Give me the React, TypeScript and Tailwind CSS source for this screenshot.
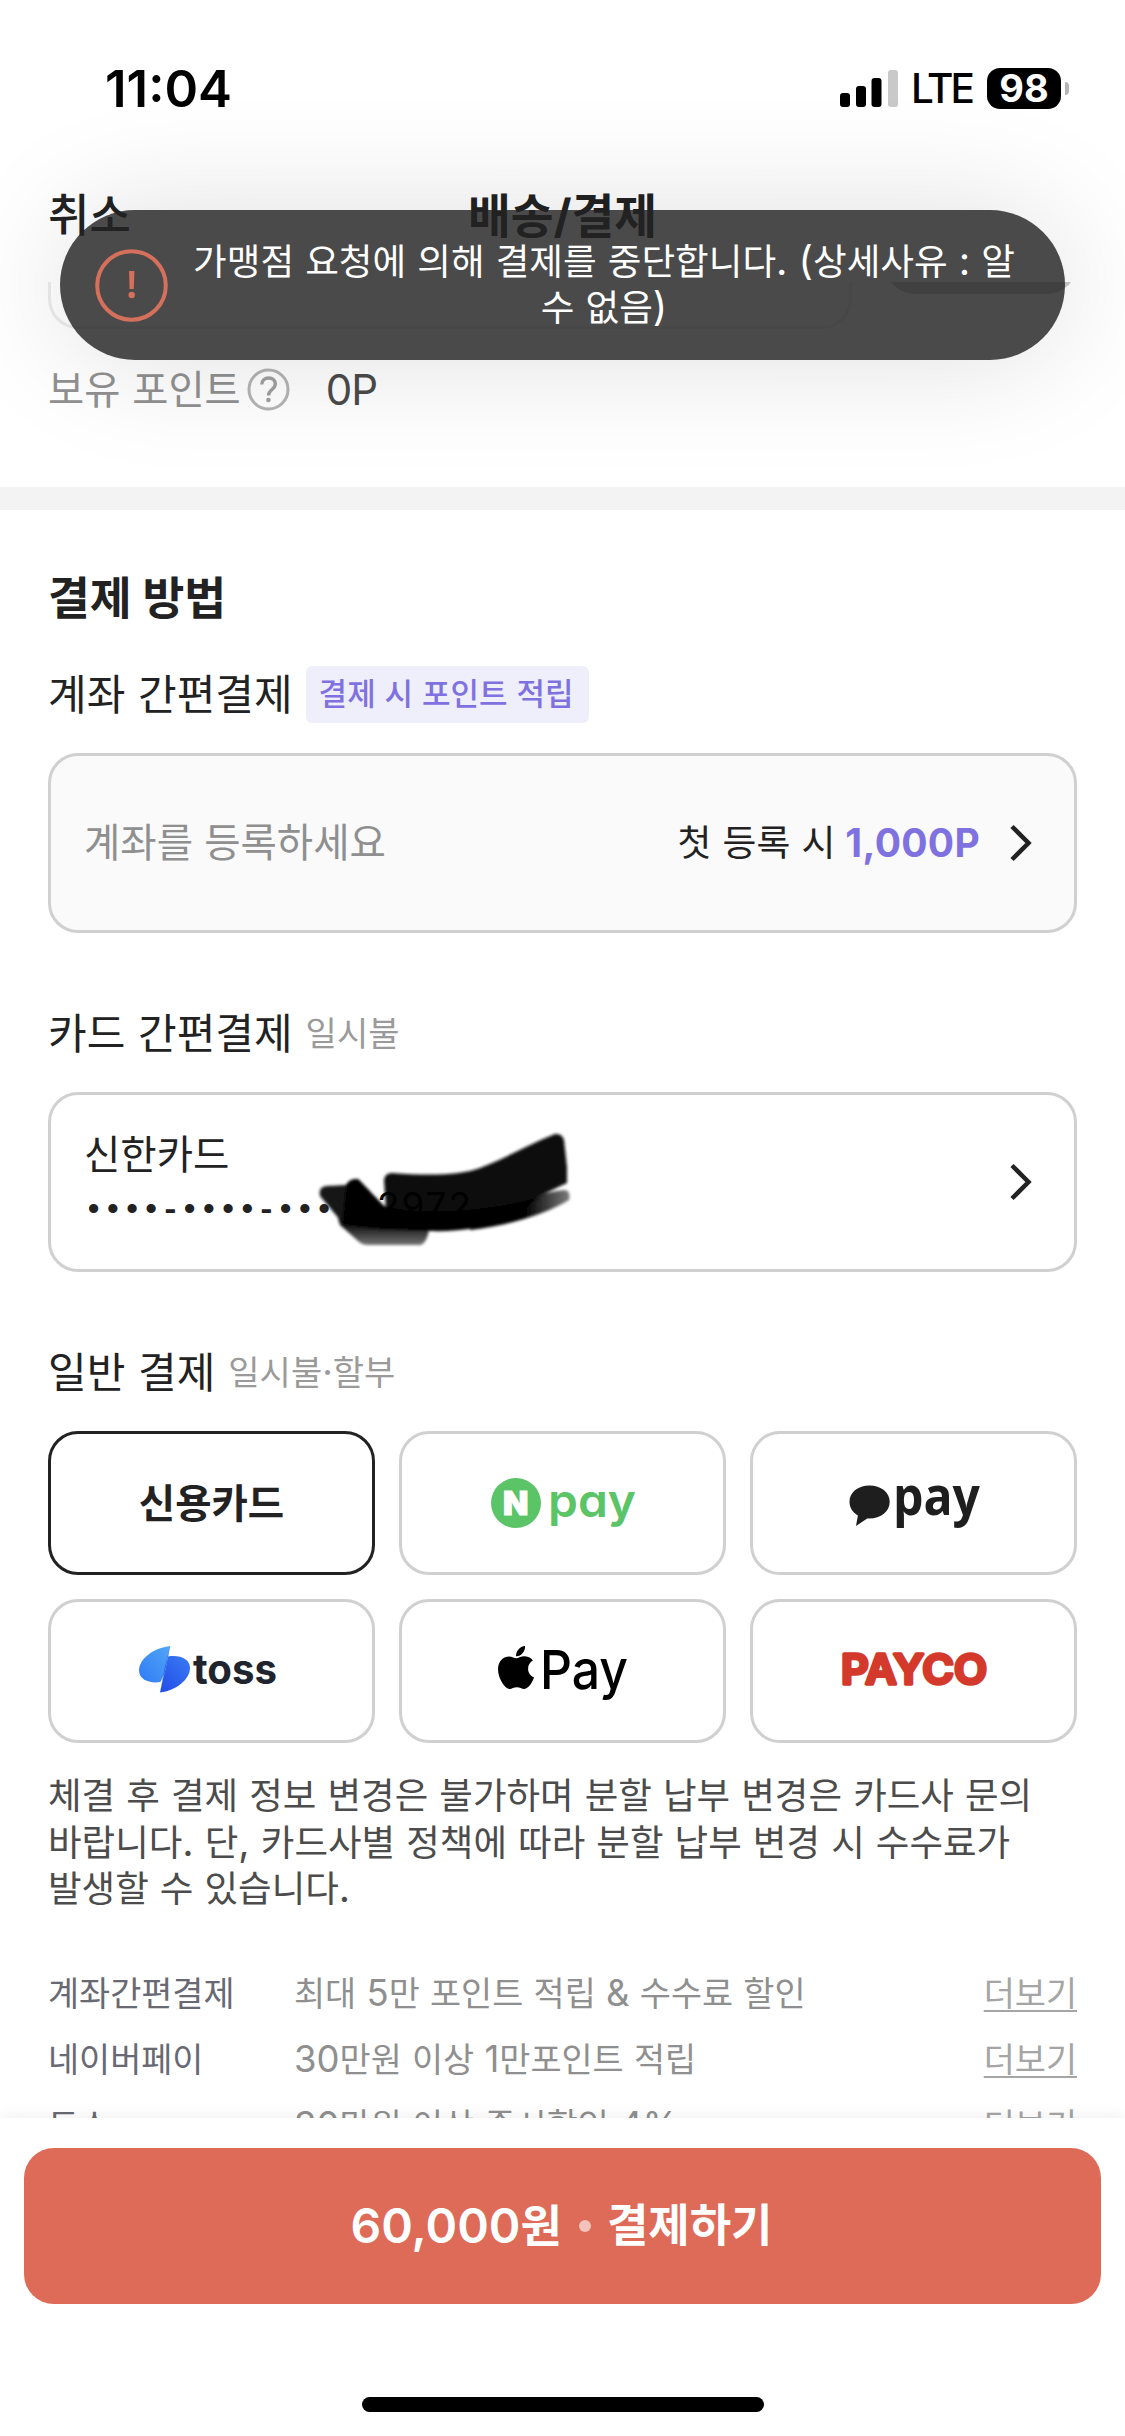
import type { ReactNode } from "react";
import { FaApple } from "react-icons/fa";

const benefits = [
  { name: "계좌간편결제", text: "최대 5만 포인트 적립 & 수수료 할인" },
  { name: "네이버페이", text: "30만원 이상 1만포인트 적립" },
  { name: "토스", text: "30만원 이상 즉시할인 4%" },
];

// latin runs and spaces sit slightly larger than the hangul around them
function Mixed({ text }: { text: string }) {
  return (
    <>
      {text.split(/([ -~·]+)/).map((part, i) =>
        i % 2 ? (
          <span key={i} className="whitespace-pre text-[1.08em] leading-none">
            {part}
          </span>
        ) : (
          part
        ),
      )}
    </>
  );
}

function StatusBar() {
  return (
    <div className="flex h-[141px] items-start justify-between pl-[105px] pr-[56px] pt-[68px] text-black">
      <span className="text-[51px] font-semibold leading-[41px]">11:04</span>
      <div className="flex h-[41px] items-center">
        <svg width="58" height="37" viewBox="0 0 58 37">
          <rect x="0" y="23" width="10" height="14" rx="3" />
          <rect x="16" y="16" width="10" height="21" rx="3" />
          <rect x="31.500" y="8" width="10" height="29" rx="3" />
          <rect x="48" y="0" width="10" height="37" rx="3" fill="#c9c9c9" />
        </svg>
        <span className="ml-[13px] w-[60px] text-[40.500px] font-medium leading-[41px] tracking-[-3px]">LTE</span>
        <span className="ml-[16px] flex h-[41px] w-[74px] items-center justify-center rounded-[13px] bg-black text-[38px] font-bold leading-[41px] text-white">
          98
        </span>
        <span className="ml-[4px] h-[13px] w-[4px] rounded-r-full bg-[#b5b5b5]" />
      </div>
    </div>
  );
}

function Toast() {
  return (
    <div className="absolute left-[60px] top-[210px] flex h-[150px] w-[1005px] items-center rounded-full bg-[#222222]/82 pl-[35px] pr-[44px] shadow-[0_0_120px_rgba(0,0,0,0.13)]">
      <svg className="shrink-0" width="73" height="73" viewBox="0 0 73 73" fill="none">
        <circle cx="36.500" cy="36.500" r="34.300" stroke="#d4705c" strokeWidth="4" />
        <path d="M34 22h5.400l-.6 18h-4.200z" fill="#d4705c" />
        <circle cx="36.700" cy="46" r="3.200" fill="#d4705c" />
      </svg>
      <p className="flex-1 whitespace-nowrap pl-[19px] text-center text-[36.600px] leading-[46.500px] text-white">
        <Mixed text="가맹점 요청에 의해 결제를 중단합니다. (상세사유 : 알" />
        <br />
        <Mixed text="수 없음)" />
      </p>
    </div>
  );
}

function Chevron() {
  return (
    <svg width="24" height="40" viewBox="0 0 24 40" fill="none" stroke="#222" strokeWidth="4.500">
      <path d="M3 3.500 19.500 20 3 36.500" />
    </svg>
  );
}

function RowTitle({ title, children }: { title: string; children?: ReactNode }) {
  return (
    <div className="flex h-[57px] items-center">
      <h3 className="text-[42px] leading-[57px] text-[#222]">
        <Mixed text={title} />
      </h3>
      {children}
    </div>
  );
}

// black marker stroke over the card number
function Scribble() {
  return (
    <svg className="absolute left-[259px] top-[30px]" width="270" height="130" viewBox="310 1125 270 130">
      <defs>
        <filter id="soft" x="-10%" y="-10%" width="120%" height="120%">
          <feGaussianBlur stdDeviation="1.600" />
        </filter>
        <linearGradient id="tail" x1="0" y1="1225" x2="0" y2="1246" gradientUnits="userSpaceOnUse">
          <stop offset="0" stopColor="#111" />
          <stop offset="1" stopColor="#777" />
        </linearGradient>
        <linearGradient id="tip" x1="525" y1="0" x2="574" y2="0" gradientUnits="userSpaceOnUse">
          <stop offset="0" stopColor="#000" />
          <stop offset="1" stopColor="#888" />
        </linearGradient>
      </defs>
      <g filter="url(#soft)">
        <path d="M338 1218 340 1225 358 1241Q362 1245 368 1245H421Q427 1242 429 1230L400 1215Z" fill="url(#tail)" />
        <path d="M470 1210C510 1204 540 1192 565 1190Q571 1191 569 1200C550 1212 510 1226 470 1230Z" fill="url(#tip)" />
        <path
          d="M384 1180Q385 1173 392 1173C430 1176 462 1175 480 1168C508 1157 530 1144 555 1134Q562 1133 564 1140L567 1167V1183C550 1191 530 1201 510 1207L440 1220 386 1210Z"
          fill="#0e0e0e"
        />
        <path d="M320 1196Q318 1187 326 1186L346 1185Q350 1178 358 1179C368 1189 377 1199 384 1206L390 1226H345Z" fill="#151515" />
        <path
          d="M346 1185Q350 1178 358 1179C368 1189 377 1199 384 1206C420 1216 490 1211 540 1197L520 1212C490 1228 460 1232 429 1231C400 1231 360 1229 342 1224Z"
          fill="#000"
        />
      </g>
      <text x="377" y="1219" fontSize="37" textLength="94" fill="#000">
        2972
      </text>
    </svg>
  );
}

function NaverPay() {
  return (
    <svg width="146" height="84" viewBox="0 -14 146 84" fill="#5bc467">
      <circle cx="26" cy="28" r="25" />
      <text x="25.800" y="40" fontSize="33" fontWeight="900" textAnchor="middle" fill="#fff" stroke="#fff" strokeWidth="1">
        N
      </text>
      <text
        x="58"
        y="41.500"
        fontSize="46"
        fontWeight="600"
        textLength="88"
        lengthAdjust="spacingAndGlyphs"
        style={{ fontFeatureSettings: "'cv11'" }}
      >
        pay
      </text>
    </svg>
  );
}

function KakaoPay() {
  return (
    <svg width="134" height="100" viewBox="0 -20 134 100" fill="#1e1e1e">
      <path d="M22.500 12.500C11 12.500 2.500 19.300 2.500 28.800c0 6 3.400 10.800 8.400 13.700L9 53 20.200 45.500c13 .8 22.500-6.500 22.500-16.700C42.700 19.300 34 12.500 22.500 12.500z" />
      <text
        x="46"
        y="42"
        fontSize="54"
        fontWeight="700"
        fontFamily="Open Sans"
        textLength="87"
        lengthAdjust="spacingAndGlyphs"
      >
        pay
      </text>
    </svg>
  );
}

function Toss() {
  return (
    <svg className="mr-[7px]" width="140" height="84" viewBox="0 -14 140 84">
      <defs>
        <linearGradient id="tossLight" x1="0" y1="1" x2="1" y2="0">
          <stop offset="0" stopColor="#2f7bf6" />
          <stop offset="1" stopColor="#52a6f7" />
        </linearGradient>
        <linearGradient id="tossDark" x1="1" y1="0" x2="0.2" y2="1">
          <stop offset="0" stopColor="#3a7cf2" />
          <stop offset="1" stopColor="#2450ea" />
        </linearGradient>
      </defs>
      <path d="M30 13.500C42 11.500 52 16 52 25c0 11-14 23-30 24.500z" fill="url(#tossDark)" />
      <path d="M32.300 3C15 5 1 16 1 27.500 1 36 11 41 22.500 39L27 29 32.300 3z" fill="url(#tossLight)" />
      <path d="M32.300 3 22 49.500 26.500 26z" fill="#2a55e8" />
      <text x="55" y="40.500" fontSize="41" fontWeight="700" fill="#20242e" textLength="84" lengthAdjust="spacingAndGlyphs">
        toss
      </text>
    </svg>
  );
}

function ApplePay() {
  return (
    <svg className="text-black" width="134" height="100" viewBox="0 -18 134 100" fill="currentColor">
      <FaApple x="-4.500" y="4" size={49} />
      <text x="44" y="49.500" fontSize="54" fontWeight="500" textLength="88" lengthAdjust="spacingAndGlyphs">
        Pay
      </text>
    </svg>
  );
}

function Payco() {
  return (
    <svg width="150" height="80" viewBox="-2 -15 150 80">
      <text
        x="0"
        y="38"
        fontSize="40.500"
        fontWeight="600"
        fill="#d43a2c"
        stroke="#d43a2c"
        strokeWidth="3.400"
        strokeLinejoin="round"
        textLength="146"
        lengthAdjust="spacingAndGlyphs"
      >
        PAYCO
      </text>
    </svg>
  );
}

function PayOption({ selected, children }: { selected?: boolean; children: ReactNode }) {
  return (
    <button
      className={
        selected
          ? "flex h-[144px] items-center justify-center rounded-[30px] border-[3px] border-[#222] pt-[3px] text-[39.500px] font-bold text-[#222]"
          : "flex h-[144px] items-center justify-center rounded-[30px] border-[3px] border-[#d0d0d0]"
      }
    >
      {children}
    </button>
  );
}

export default function App() {
  return (
    <div className="relative flex h-[2436px] w-[1125px] flex-col overflow-hidden bg-white font-['Inter','Noto_Sans_CJK_KR',sans-serif] text-[#222]">
      <StatusBar />
      <header className="grid h-[141px] shrink-0 grid-cols-3 items-start px-12 pt-[45px] text-[45px] leading-[60px]">
        <span className="font-medium">취소</span>
        <h1 className="text-center text-[46.500px] font-bold">배송/결제</h1>
      </header>

      <main className="min-h-0 flex-1 overflow-hidden">
        <div className="h-[205px]">
          <div className="flex h-[47px] items-start justify-between px-12">
            <div className="h-[47px] w-[804px] rounded-b-[30px] border-x-[3px] border-b-[3px] border-[#ececec]" />
            <div className="h-[12px] w-[192px] overflow-hidden">
              <div className="-mt-[60px] h-[72px] rounded-[30px] bg-[#c8c8c8]" />
            </div>
          </div>
          <div className="flex items-center px-12 pt-[32px] leading-[57px]">
            <span className="text-[39.300px] text-[#919191]">
              <Mixed text="보유 포인트" />
            </span>
            <svg className="ml-[6px]" width="43" height="43" viewBox="0 0 43 43" fill="none" stroke="#b5b5b5" strokeWidth="3">
              <circle cx="21.500" cy="21.500" r="19.500" />
              <path d="M14.800 16.500c0-4 3-6.500 6.800-6.500s6.700 2.400 6.700 6c0 5.500-6.800 5.500-6.800 11.500" stroke="#a0a0a0" strokeWidth="3.400" />
              <circle cx="21.400" cy="32" r="2.300" fill="#a0a0a0" stroke="none" />
            </svg>
            <span className="ml-[36px] text-[42px] tracking-[-1px] text-[#4b4b4b]">0P</span>
          </div>
        </div>

        <div className="h-[23px] bg-[#f3f3f3]" />

        <section className="px-12 pt-[59px]">
          <h2 className="text-[45.500px] font-bold leading-[60px]">결제 방법</h2>

          <div className="mt-[37px]">
            <RowTitle title="계좌 간편결제">
              <span className="ml-[13px] flex h-[57px] w-[283px] items-center justify-center whitespace-nowrap rounded-[6px] bg-[#efeffc] pr-[2px] text-[31px] font-medium text-[#7f72e0]">
                <span>
                  <Mixed text="결제 시 포인트 적립" />
                </span>
              </span>
            </RowTitle>
          </div>
          <div className="mt-[30px] flex h-[180px] items-center rounded-[30px] border-[3px] border-[#d0d0d0] bg-[#fafafa] pl-[33px] pr-[41px]">
            <span className="flex-1 pt-[2px] text-[39.500px] text-[#8f8f8f]">계좌를 등록하세요</span>
            <span className="text-[36.800px]">
              <Mixed text="첫 등록 시" />
            </span>
            <span className="ml-[10px] mr-[29px] text-[39px] font-bold tracking-[0.300px] text-[#7f72e0]">1,000P</span>
            <Chevron />
          </div>

          <div className="mt-[72px]">
            <RowTitle title="카드 간편결제">
              <span className="ml-[13px] text-[34px] text-[#9a9a9a]">일시불</span>
            </RowTitle>
          </div>
          <div className="relative mt-[30px] flex h-[180px] items-center rounded-[30px] border-[3px] border-[#d0d0d0] pl-[33px] pr-[41px]">
            <div className="flex-1 pt-[3px]">
              <p className="text-[39.500px] leading-[54px]">신한카드</p>
              <p className="font-['Liberation_Mono'] text-[32px] font-bold leading-[57px]">••••-••••-••••</p>
            </div>
            <Chevron />
            <Scribble />
          </div>

          <div className="mt-[72px]">
            <RowTitle title="일반 결제">
              <span className="ml-[13px] text-[34px] text-[#9a9a9a]">
                <Mixed text="일시불·할부" />
              </span>
            </RowTitle>
          </div>
          <div className="mt-[30px] grid grid-cols-3 gap-6">
            <PayOption selected>신용카드</PayOption>
            <PayOption>
              <NaverPay />
            </PayOption>
            <PayOption>
              <KakaoPay />
            </PayOption>
            <PayOption>
              <Toss />
            </PayOption>
            <PayOption>
              <ApplePay />
            </PayOption>
            <PayOption>
              <Payco />
            </PayOption>
          </div>

          <p className="mt-[30px] whitespace-nowrap text-[36.500px] leading-[46.500px] text-[#4c4c4c]">
            <Mixed text="체결 후 결제 정보 변경은 불가하며 분할 납부 변경은 카드사 문의" />
            <br />
            <Mixed text="바랍니다. 단, 카드사별 정책에 따라 분할 납부 변경 시 수수료가" />
            <br />
            <Mixed text="발생할 수 있습니다." />
          </p>

          <ul className="mt-[49px] text-[33.800px]">
            {benefits.map((b) => (
              <li key={b.name} className="flex h-[66px] items-center">
                <span className="w-[246px] text-[#686973]">{b.name}</span>
                <span className="flex-1 text-[#8f8f8f]">
                  <Mixed text={b.text} />
                </span>
                <a className="text-[#a5a5a5] underline decoration-2 underline-offset-4">더보기</a>
              </li>
            ))}
          </ul>
        </section>
      </main>

      <footer className="z-10 flex h-[318px] shrink-0 flex-col items-center bg-white px-6 pt-[30px] shadow-[0_0_16px_rgba(0,0,0,0.08)]">
        <button className="flex h-[156px] w-full items-center justify-center rounded-[30px] bg-[#de6a58] pr-[2px] text-[45px] font-bold text-white">
          <span>
            <span className="text-[48px] font-semibold">60,000</span>원
          </span>
          <span className="ml-[17px] mr-[16px] h-[12px] w-[12px] rounded-full bg-white/60" />
          결제하기
        </button>
        <div className="mt-[93px] h-[15px] w-[402px] rounded-full bg-black" />
      </footer>

      <Toast />
    </div>
  );
}
